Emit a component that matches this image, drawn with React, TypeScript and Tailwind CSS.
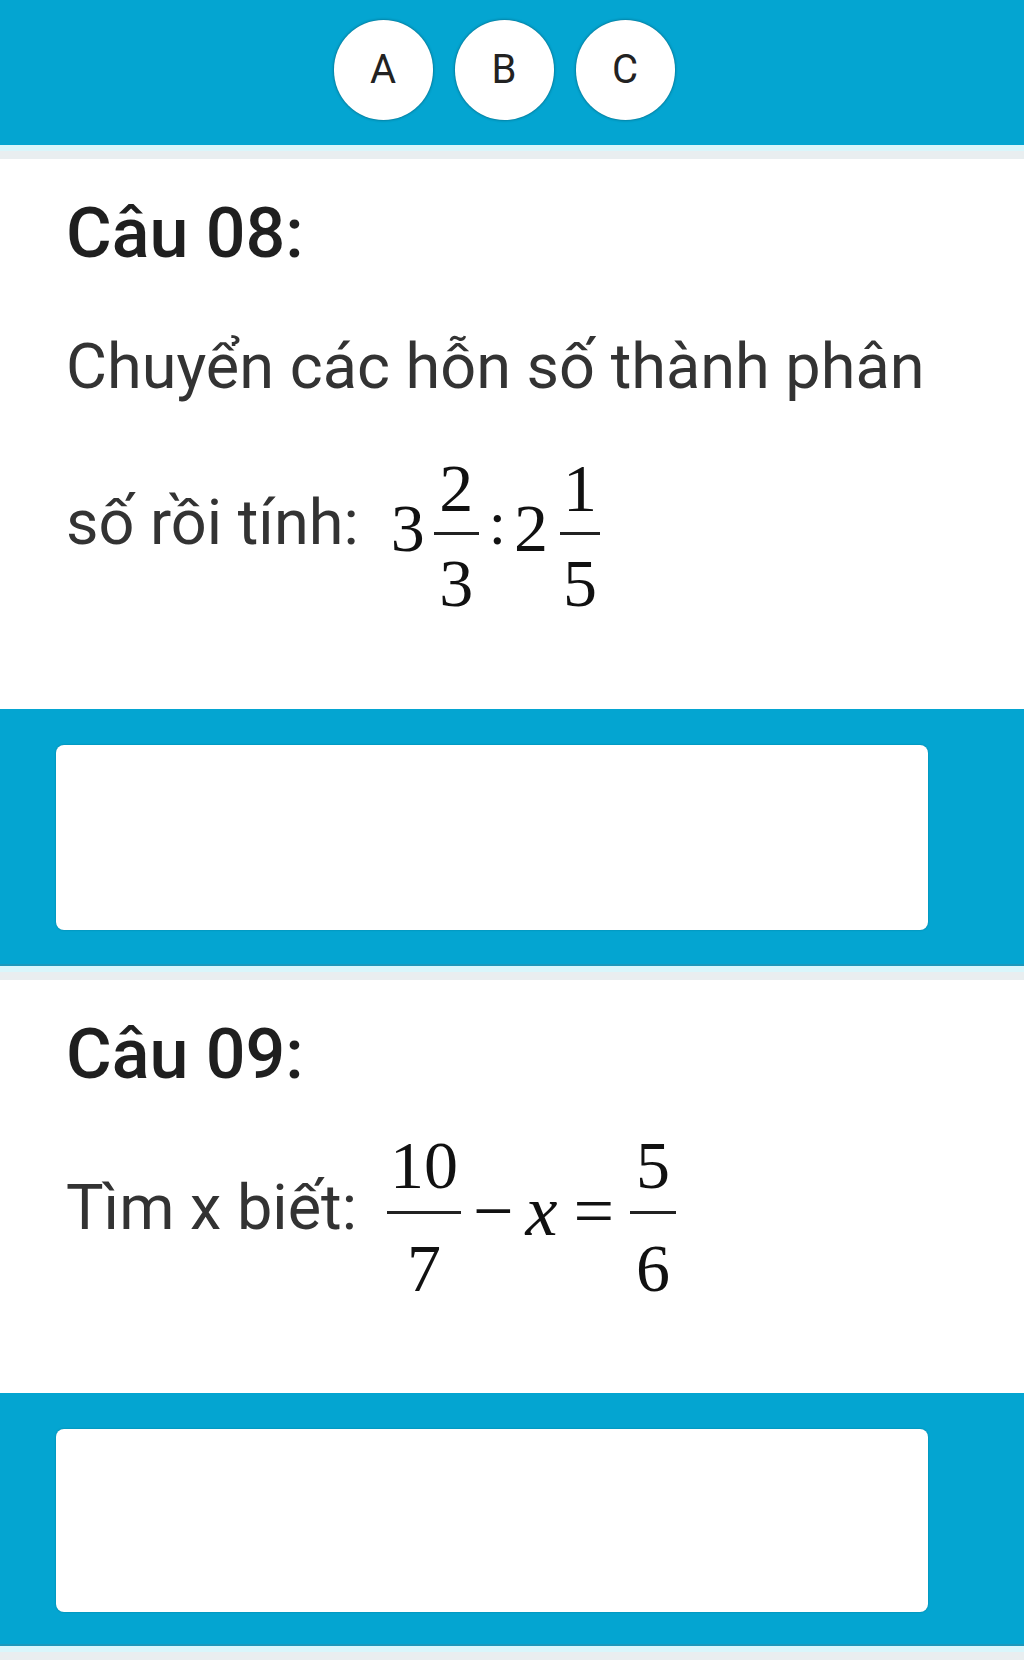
import React from 'react';

const serif = "font-['Liberation_Serif','Times_New_Roman',serif]";

const Frac: React.FC<{ num: string; den: string; w: string; top: string; bottom: string }> = ({ num, den, w, top, bottom }) => (
  <span className={`flex flex-col items-center ${serif} text-[68px] leading-none text-[#111]`}>
    <span className="leading-none">{num}</span>
    <span className={`${w} ${top} h-[3px] bg-[#222]`} />
    <span className={`${bottom} leading-none`}>{den}</span>
  </span>
);

const Divider: React.FC = () => (
  <div>
    <div className="h-[6px] bg-[#d9f6fb]" />
    <div className="h-[8px] bg-[#e9eef0]" />
  </div>
);

const AnswerBox: React.FC<{ pb: string; h: string }> = ({ pb, h }) => (
  <div className={`bg-[#04a5d1] pt-[36px] ${pb} border-b-2 border-[#1e98bb]`}>
    <div className={`ml-[56px] w-[872px] ${h} rounded-lg bg-white shadow-[0_0_2px_rgba(0,0,0,0.25)]`} />
  </div>
);

export default function App() {
  return (
    <div className="w-[1024px] h-[1675px] overflow-hidden bg-white font-['Roboto','Liberation_Sans',sans-serif]">
      {/* answer choices */}
      <div className="bg-[#04a5d1] h-[145px] pt-[20px] flex justify-center gap-[22px] pr-[16px]">
        {['A', 'B', 'C'].map((c) => (
          <div
            key={c}
            className="w-[99px] h-[100px] rounded-full bg-white flex items-center justify-center text-[40px] text-[#222] shadow-[0_0_3px_rgba(0,0,0,0.45)]"
          >
            {c}
          </div>
        ))}
      </div>
      <Divider />

      {/* Câu 08 */}
      <div className="pt-[33px] pb-[92px] pl-[66px]">
        <h2 className="text-[70px] leading-[1.172] font-medium text-[#1f1f1f]">Câu 08:</h2>
        <p className="mt-[56px] text-[63px] leading-[1.172] text-[#333]">Chuyển các hỗn số thành phân</p>
        <div className="mt-[50px] flex items-start">
          <span className="mt-[32px] text-[63px] leading-[1.172] text-[#333]">số rồi tính:</span>
          <span className={`ml-[32px] mt-[40px] ${serif} text-[68px] leading-none text-[#111]`}>3</span>
          <span className="ml-[9px]">
            <Frac num="2" den="3" w="w-[45px]" top="mt-[10px]" bottom="mt-[14px]" />
          </span>
          <span className={`ml-[10px] mt-[38px] ${serif} text-[62px] leading-none text-[#111]`}>:</span>
          <span className={`ml-[8px] mt-[40px] ${serif} text-[68px] leading-none text-[#111]`}>2</span>
          <span className="ml-[12px]">
            <Frac num="1" den="5" w="w-[40px]" top="mt-[10px]" bottom="mt-[14px]" />
          </span>
        </div>
      </div>

      <AnswerBox pb="pb-[34px]" h="h-[185px]" />
      <Divider />

      {/* Câu 09 */}
      <div className="pt-[33px] pb-[91px] pl-[66px]">
        <h2 className="text-[70px] leading-[1.172] font-medium text-[#1f1f1f]">Câu 09:</h2>
        <div className="mt-[36px] flex items-start">
          <span className="mt-[40px] text-[63px] leading-[1.172] text-[#333]">Tìm x biết:</span>
          <span className="ml-[30px]">
            <Frac num="10" den="7" w="w-[74px]" top="mt-[12px]" bottom="mt-[20px]" />
          </span>
          <span className={`ml-[12px] mt-[44px] ${serif} text-[72px] leading-none text-[#111]`}>−</span>
          <span className={`ml-[12px] mt-[44px] ${serif} italic text-[72px] leading-none text-[#111]`}>x</span>
          <span className={`ml-[16px] mt-[44px] ${serif} text-[72px] leading-none text-[#111]`}>=</span>
          <span className="ml-[16px]">
            <Frac num="5" den="6" w="w-[46px]" top="mt-[12px]" bottom="mt-[20px]" />
          </span>
        </div>
      </div>

      <AnswerBox pb="pb-[32px]" h="h-[183px]" />
      <Divider />
    </div>
  );
}
